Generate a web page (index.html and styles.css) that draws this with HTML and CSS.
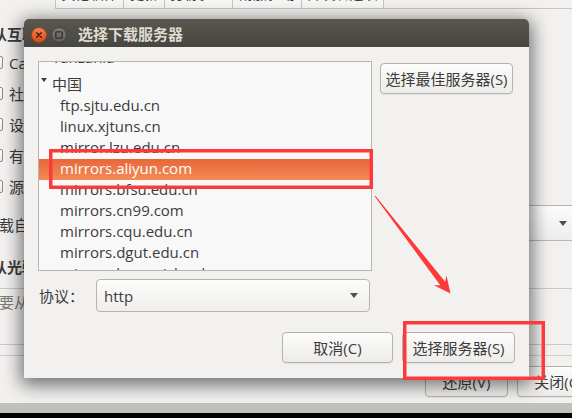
FILE: index.html
```html
<!DOCTYPE html>
<html lang="zh-CN">
<head>
<meta charset="utf-8">
<title>选择下载服务器</title>
<link rel="stylesheet" href="styles.css">
</head>
<body>
<div class="desktop">

  <div class="mainwin">
    <div class="tabbar">
      <div class="tab-active"></div>
      <div class="tab tab-a"><span class="tab-text">其他软件</span></div>
      <div class="tab tab-b"><span class="tab-text">更新</span></div>
      <div class="tab tab-c"><span class="tab-text">身份验证</span></div>
      <div class="tab tab-d"><span class="tab-text">附加驱动</span></div>
      <div class="tab tab-e"><span class="tab-text">开发者选项</span></div>
      <div class="tab-fill"></div>
    </div>
    <div class="heading heading-net">从互联网下载</div>
    <div class="checks">
      <div class="check"><span class="box"></span><span>Canonical 支持的免费和开源软件 (main)</span></div>
      <div class="check"><span class="box"></span><span>社区维护的免费和开源软件 (universe)</span></div>
      <div class="check"><span class="box"></span><span>设备的专有驱动 (restricted)</span></div>
      <div class="check"><span class="box"></span><span>有版权和合法性问题的软件 (multiverse)</span></div>
      <div class="check"><span class="box"></span><span>源代码</span></div>
    </div>
    <div class="dl-row">
      <span class="dl-label">下载自：</span>
      <div class="bg-combo"><span class="tri"></span></div>
    </div>
    <div class="heading heading-cd">从光驱安装</div>
    <div class="frame"><p class="hint">需要从光盘安装，请插入 Ubuntu 安装光盘。</p></div>
    <div class="sep"></div>
    <div class="bottombar">
      <button class="btn bg-btn disabled">还原(V)</button>
      <button class="btn bg-btn close-btn">关闭(C)</button>
    </div>
  </div>

  <div class="dialog">
    <div class="titlebar">
      <svg class="wbtn" width="16" height="16" viewBox="0 0 16 16">
        <defs>
          <linearGradient id="gc" x1="0" y1="0" x2="0" y2="1">
            <stop offset="0" stop-color="#f48456"/>
            <stop offset="1" stop-color="#dc4616"/>
          </linearGradient>
        </defs>
        <circle cx="8" cy="8" r="7.5" fill="url(#gc)" stroke="#a93b12" stroke-width="0.8"/>
        <path d="M5.7 5.7 L10.3 10.3 M10.3 5.7 L5.7 10.3" stroke="#3b1a0c" stroke-width="1.3" stroke-linecap="round"/>
      </svg>
      <svg class="wbtn wbtn-min" width="16" height="16" viewBox="0 0 16 16">
        <defs>
          <linearGradient id="gm" x1="0" y1="0" x2="0" y2="1">
            <stop offset="0" stop-color="#7c7b76"/>
            <stop offset="1" stop-color="#5d5c57"/>
          </linearGradient>
        </defs>
        <circle cx="8" cy="8" r="7.5" fill="url(#gm)" stroke="#3d3c38" stroke-width="0.8"/>
        <rect x="4.8" y="4.8" width="6.4" height="6.4" rx="0.8" fill="none" stroke="#34332f" stroke-width="1.3"/>
      </svg>
      <span class="title">选择下载服务器</span>
    </div>
    <div class="dlg-body">
      <div class="toprow">
        <div class="tree">
          <div class="tree-list">
            <div class="row country"><span class="country-name">Tanzania</span></div>
            <div class="row country cn"><span class="expander"></span><span>中国</span></div>
            <div class="row item">ftp.sjtu.edu.cn</div>
            <div class="row item">linux.xjtuns.cn</div>
            <div class="row item">mirror.lzu.edu.cn</div>
            <div class="row item selected">mirrors.aliyun.com</div>
            <div class="row item">mirrors.bfsu.edu.cn</div>
            <div class="row item">mirrors.cn99.com</div>
            <div class="row item">mirrors.cqu.edu.cn</div>
            <div class="row item">mirrors.dgut.edu.cn</div>
            <div class="row item">mirrors.huaweicloud.com</div>
          </div>
        </div>
        <button class="btn best">选择最佳服务器(S)</button>
      </div>
      <div class="protorow">
        <span class="proto-label">协议：</span>
        <div class="combo"><span>http</span><span class="tri"></span></div>
      </div>
      <div class="btnrow">
        <button class="btn cancel">取消(C)</button>
        <button class="btn ok">选择服务器(S)</button>
      </div>
    </div>
  </div>

  <svg class="annot" width="572" height="418" viewBox="0 0 572 418">
    <rect x="50.75" y="150.75" width="320.5" height="36.5" fill="none" stroke="#fc3a3a" stroke-width="3.5"/>
    <rect x="404.75" y="322.75" width="138.5" height="55.5" fill="none" stroke="#fc3a3a" stroke-width="3.5"/>
    <polygon points="375.4,195.7 445.1,281.7 446.5,275.4 450.5,293.5 433.9,285.2 440.3,285.3 374.6,196.3" fill="#fc3a3a"/>
  </svg>
</div>
</body>
</html>
```
FILE: styles.css
```css
* { box-sizing: border-box; }
html, body { margin: 0; padding: 0; }
body {
  width: 572px;
  height: 418px;
  overflow: hidden;
  font-family: "Open Sans", "Noto Sans CJK SC", sans-serif;
  font-size: 15px;
  color: #3c3c3c;
}
.desktop {
  position: relative;
  width: 572px;
  height: 418px;
  overflow: hidden;
  background: linear-gradient(to bottom, #c2c0bc 0, #c2c0bc 413px, #000 413px);
}

/* ---------- background window ---------- */
.mainwin {
  position: absolute;
  left: -30px;
  top: 0;
  width: 644px;
  height: 403px;
  background: #f2f1f0;
  padding: 0 14px;
  display: flex;
  flex-direction: column;
}
.tabbar {
  display: flex;
  height: 9px;
  flex: none;
}
.tab-active { width: 71px; }
.tab {
  height: 9px;
  overflow: hidden;
  border-right: 1px solid #c9c6c1;
  border-bottom: 1px solid #c9c6c1;
  background: #f6f6f5;
  text-align: center;
  font-size: 14px;
}
.tab-a { width: 69px; border-left: 1px solid #c9c6c1; }
.tab-b { width: 41px; }
.tab-c { width: 68px; }
.tab-d { width: 69px; }
.tab-e { width: 82px; }
.tab-text {
  display: block;
  line-height: 20px;
  margin-top: -16px;
  white-space: nowrap;
}
.tab-fill { flex: 1; border-bottom: 1px solid #c9c6c1; }

.heading {
  font-weight: bold;
  line-height: 20px;
  padding-left: 8px;
  white-space: nowrap;
}
.heading-net { margin-top: 15px; }
.heading-cd { margin-top: 16px; }
.checks { margin-top: 3px; }
.check {
  height: 31px;
  display: flex;
  align-items: center;
  gap: 6px;
  padding-left: 6px;
  line-height: 20px;
  white-space: nowrap;
}
.box {
  width: 13px;
  height: 13px;
  border: 1px solid #8e8b86;
  border-radius: 2px;
  background: linear-gradient(#ffffff, #ecebe9);
  flex: none;
}
.dl-row {
  margin-top: 3px;
  height: 36px;
  display: flex;
  align-items: center;
  gap: 6px;
}
.dl-label { line-height: 20px; padding-top: 4px; white-space: nowrap; }
.bg-combo {
  width: 528px;
  height: 36px;
  border: 1px solid #b9b6b0;
  border-radius: 4px;
  background: linear-gradient(#fcfcfc, #eeedec);
  display: flex;
  align-items: center;
  justify-content: flex-end;
  padding-right: 10px;
}
.tri {
  width: 0;
  height: 0;
  border-left: 4.5px solid transparent;
  border-right: 4.5px solid transparent;
  border-top: 5px solid #4e4e4e;
}
.frame {
  margin-top: 11px;
  height: 57px;
  border-top: 1px solid #cbc8c3;
  border-bottom: 1px solid #cbc8c3;
}
.hint {
  margin: 0;
  padding-top: 3px;
  line-height: 20px;
  color: #7d7b78;
  white-space: nowrap;
}
.sep { margin-top: 10px; height: 1px; background: #cfccc7; flex: none; }
.bottombar {
  margin-top: 10px;
  display: flex;
  justify-content: flex-end;
  gap: 9px;
}
.bg-btn { width: 83px; height: 31px; }
.close-btn { width: 83px; }
.disabled { color: #a9a7a3; border-color: #cfccc7; background: #f4f3f2; }

/* ---------- buttons ---------- */
.btn {
  height: 31px;
  border: 1px solid #b5b1ab;
  border-radius: 4px;
  background: linear-gradient(#fcfcfb, #edecea);
  font: inherit;
  font-size: 15px;
  color: #3c3c3c;
  line-height: 20px;
  padding: 0;
  box-shadow: 0 1px 1px rgba(0, 0, 0, 0.06);
  white-space: nowrap;
}

/* ---------- dialog ---------- */
.dialog {
  position: absolute;
  left: 24px;
  top: 19px;
  width: 505px;
  height: 359px;
  background: #f2f1f0;
  border-radius: 5px 5px 0 0;
  box-shadow: 0 4px 18px 3px rgba(0, 0, 0, 0.55);
  display: flex;
  flex-direction: column;
}
.titlebar {
  height: 28px;
  flex: none;
  display: flex;
  align-items: center;
  padding: 2px 0 0 7px;
  background: linear-gradient(#5a5751, #47453f);
  border-radius: 5px 5px 0 0;
}
.wbtn { flex: none; margin-top: 1px; }
.wbtn-min { margin-left: 4px; }
.title {
  margin-left: 11px;
  color: #dfdbd2;
  font-weight: bold;
  font-size: 15px;
  line-height: 20px;
  white-space: nowrap;
}
.dlg-body {
  flex: 1;
  display: flex;
  flex-direction: column;
  padding: 14px 14px 0 14px;
}
.toprow {
  display: flex;
  gap: 8px;
  align-items: flex-start;
}
.tree {
  width: 334px;
  height: 210px;
  flex: none;
  border: 1px solid #b8b4ae;
  background: #f8f8f8;
  overflow: hidden;
}
.tree-list { margin-top: -14px; }
.row {
  height: 21px;
  line-height: 19px;
  padding-bottom: 2px;
  white-space: nowrap;
}
.country { padding-left: 13px; }
.cn {
  height: 27px;
  padding: 3px 0 0 1.5px;
  display: flex;
  align-items: center;
  line-height: 20px;
}
.expander {
  align-self: flex-start;
  margin-top: 6px;
  margin-right: 5.5px;
  width: 0;
  height: 0;
  border-left: 3px solid transparent;
  border-right: 3px solid transparent;
  border-top: 4px solid #3c3c3c;
}
.item { padding-left: 21px; }
.selected {
  background: linear-gradient(#e8673a, #f48a55);
  color: #ffffff;
}
.best { width: 133px; margin-top: 2px; }
.protorow {
  margin-top: 8px;
  height: 33px;
  display: flex;
  align-items: center;
}
.proto-label { width: 58px; padding-left: 1px; line-height: 20px; }
.combo {
  width: 274px;
  height: 33px;
  border: 1px solid #b8b4ae;
  border-radius: 4px;
  background: linear-gradient(#fcfcfb, #efeeec);
  display: flex;
  align-items: center;
  justify-content: space-between;
  padding: 0 11px 0 7px;
  line-height: 20px;
}
.btnrow {
  margin-top: 20px;
  display: flex;
  justify-content: flex-end;
  gap: 9px;
}
.cancel { width: 111px; }
.ok { width: 113px; }

/* ---------- annotations ---------- */
.annot {
  position: absolute;
  left: 0;
  top: 0;
  pointer-events: none;
}
```
